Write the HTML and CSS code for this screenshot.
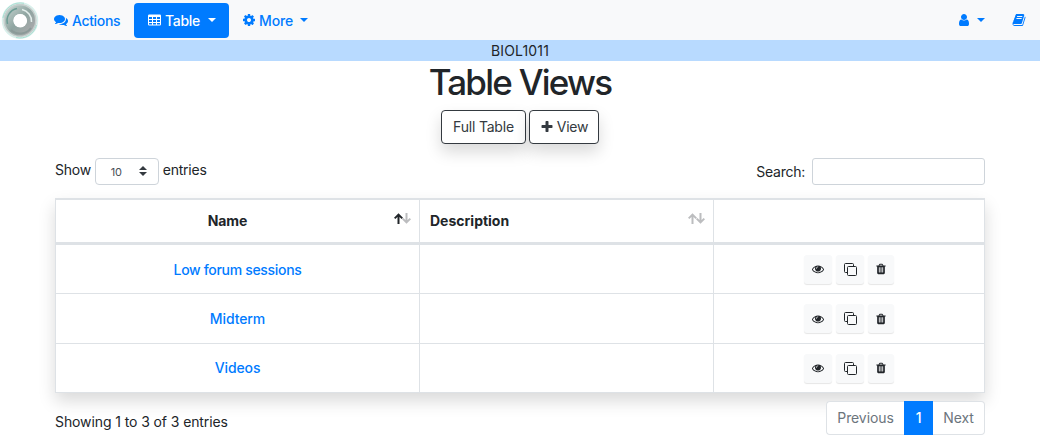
FILE: index.html
```html
<!DOCTYPE html>
<html lang="en">
<head>
<meta charset="utf-8">
<title>Table Views</title>
<link rel="stylesheet" href="styles.css">
</head>
<body>
<svg class="defs" width="0" height="0" aria-hidden="true">
  <symbol id="comments" viewBox="0 0 1792 1792"><path d="M1408 768q0 139-94 257t-256.500 186.500-353.500 68.500q-86 0-176-16-124 88-278 128-36 9-86 16h-3q-11 0-20.500-8t-11.500-21q-1-3-1-6.500t.5-6.500 2-6l2.500-5 3.500-5.500 4-5 4.500-5 4-4.500q5-6 23-25t26-29.500 22.500-29 25-38.500 20.500-44q-124-72-195-177t-71-224q0-139 94-257t256.500-186.500 353.500-68.500 353.500 68.500 256.500 186.500 94 257zm384 256q0 120-71 224.500t-195 176.500q10 24 20.500 44t25 38.500 22.500 29 26 29.500 23 25q1 1 4 4.500t4.500 5 4 5 3.500 5.500l2.500 5 2 6 .5 6.500-1 6.500q-3 14-13 22t-22 7q-50-7-86-16-154-40-278-128-90 16-176 16-271 0-472-132 58 4 88 4 161 0 309-45t264-129q125-92 192-212t67-254q0-77-23-152 129 71 204 178t75 230z"/></symbol>
  <symbol id="cog" viewBox="0 0 1792 1792"><path d="M1152 896q0-106-75-181t-181-75-181 75-75 181 75 181 181 75 181-75 75-181zm512-109v222q0 12-8 23t-20 13l-185 28q-19 54-39 91 35 50 107 138 10 12 10 25t-9 23q-27 37-99 108t-94 71q-12 0-26-9l-138-108q-44 23-91 38-16 136-29 186-7 28-36 28h-222q-14 0-24.500-8.500t-11.500-21.500l-28-184q-49-16-90-37l-141 107q-10 9-25 9-14 0-25-11-126-114-165-168-7-10-7-23 0-12 8-23 15-21 51-66.500t54-70.500q-27-50-41-99l-183-27q-13-2-21-12.500t-8-23.500v-222q0-12 8-23t19-13l186-28q14-46 39-92-40-57-107-138-10-12-10-24 0-10 9-23 26-36 98.500-107.500t94.500-71.500q13 0 26 10l138 107q44-23 91-38 16-136 29-186 7-28 36-28h222q14 0 24.500 8.500t11.500 21.500l28 184q49 16 90 37l142-107q9-9 24-9 13 0 25 10 129 119 165 170 7 8 7 22 0 12-8 23-15 21-51 66.500t-54 70.500q26 50 41 98l183 28q13 2 21 12.500t8 23.500z"/></symbol>
  <symbol id="user" viewBox="0 0 1792 1792"><path d="M1536 1399q0 109-62.500 187t-150.500 78h-854q-88 0-150.500-78t-62.500-187q0-85 8.500-160.500t31.500-152 58.500-131 94-89 134.500-34.500q131 128 313 128t313-128q76 0 134.500 34.500t94 89 58.500 131 31.500 152 8.500 160.500zm-256-887q0 159-112.500 271.500t-271.500 112.500-271.500-112.500-112.500-271.500 112.500-271.500 271.500-112.500 271.500 112.500 112.500 271.500z"/></symbol>
  <symbol id="book" viewBox="0 0 1792 1792"><path d="M1703 478q40 57 18 129l-275 906q-19 64-76.500 107.500t-122.500 43.500h-923q-77 0-148.500-53.500t-99.500-131.500q-24-67-2-127 0-4 3-27t4-37q1-8-3-21.500t-3-19.500q2-11 8-21t16.500-23.500 16.500-23.500q23-38 45-91.500t30-91.500q3-10 .5-30t-.5-28q3-11 17-28t17-23q21-36 42-92t25-90q1-9-2.500-32t.5-28q4-13 22-30.500t22-22.500q19-26 42.500-84.500t27.500-96.500q1-8-3-25.500t-2-26.500q2-8 9-18t18-23 17-21q8-12 16.500-30.500t15-35 16-36 19.500-32 26.500-23.500 36-11.500 47.500 5.500l-1 3q38-9 51-9h761q74 0 114 56t18 130l-274 906q-36 119-71.500 153.500t-128.500 34.500h-869q-27 0-38 15-11 16-1 43 24 70 144 70h923q29 0 56-15.500t35-41.500l300-987q7-22 5-57 38 15 59 43zm-1064 2q-4 13 2 22.500t20 9.500h608q13 0 25.500-9.500t16.500-22.500l21-64q4-13-2-22.500t-20-9.500h-608q-13 0-25.500 9.500t-16.500 22.500zm-83 256q-4 13 2 22.500t20 9.500h608q13 0 25.500-9.500t16.500-22.500l21-64q4-13-2-22.500t-20-9.500h-608q-13 0-25.500 9.500t-16.500 22.500z"/></symbol>
  <symbol id="plus" viewBox="0 0 1792 1792"><path d="M1600 736v192q0 40-28 68t-68 28h-416v416q0 40-28 68t-68 28h-192q-40 0-68-28t-28-68v-416h-416q-40 0-68-28t-28-68v-192q0-40 28-68t68-28h416v-416q0-40 28-68t68-28h192q40 0 68 28t28 68v416h416q40 0 68 28t28 68z"/></symbol>
  <symbol id="eye" viewBox="0 0 1792 1792"><path d="M1664 960q-152-236-381-353 61 104 61 225 0 185-131.500 316.500t-316.500 131.500-316.500-131.500-131.500-316.500q0-121 61-225-229 117-381 353 133 205 333.500 326.500t434.500 121.500 434.500-121.500 333.500-326.500zm-720-384q0-20-14-34t-34-14q-125 0-214.500 89.500t-89.500 214.500q0 20 14 34t34 14 34-14 14-34q0-86 61-147t147-61q20 0 34-14t14-34zm848 384q0 34-20 69-140 230-376.500 368.500t-499.500 138.500-499.500-139-376.500-368q-20-35-20-69t20-69q140-229 376.500-368t499.500-139 499.500 139 376.500 368q20 35 20 69z"/></symbol>
  <symbol id="trash" viewBox="0 0 1792 1792"><path d="M704 1376v-704q0-14-9-23t-23-9h-64q-14 0-23 9t-9 23v704q0 14 9 23t23 9h64q14 0 23-9t9-23zm256 0v-704q0-14-9-23t-23-9h-64q-14 0-23 9t-9 23v704q0 14 9 23t23 9h64q14 0 23-9t9-23zm256 0v-704q0-14-9-23t-23-9h-64q-14 0-23 9t-9 23v704q0 14 9 23t23 9h64q14 0 23-9t9-23zm-544-992h448l-48-117q-7-9-17-11h-317q-10 2-17 11zm928 32v64q0 14-9 23t-23 9h-96v948q0 83-47 143.500t-113 60.500h-832q-66 0-113-58.500t-47-141.500v-952h-96q-14 0-23-9t-9-23v-64q0-14 9-23t23-9h309l70-167q15-37 54-63t79-26h320q40 0 79 26t54 63l70 167h309q14 0 23 9t9 23z"/></symbol>
  <symbol id="grid" viewBox="0 0 13 12"><path fill-rule="evenodd" d="M1.200 .5h10.600q1.200 0 1.200 1.200v8.600q0 1.200-1.200 1.200H1.200Q0 11.500 0 10.300V1.700Q0 .5 1.200 .5zM1 3v2h3V3zm4 0v2h3V3zm4 0v2h3V3zM1 6v2h3V6zm4 0v2h3V6zm4 0v2h3V6zM1 9v1.500h3V9zm4 0v1.500h3V9zm4 0v1.500h3V9z"/></symbol>
  <symbol id="clone" viewBox="0 0 13 13"><g fill="none" stroke="currentColor"><rect x="3.500" y="3.500" width="9" height="9" rx="1"/><path d="M3.500 9.500h-2q-1 0-1-1v-7q0-1 1-1h7q1 0 1 1v2"/></g></symbol>
  <symbol id="up" viewBox="0 0 9 11"><path fill="none" stroke="currentColor" stroke-width="2" d="M4.500 11V1.500M.7 5.400 4.500 1.600l3.800 3.800"/></symbol>
</svg>

<nav class="navbar">
  <svg class="logo" viewBox="0 0 40 40">
    <defs>
      <linearGradient id="ring" x1="0" y1="0" x2="1" y2="1">
        <stop offset="0" stop-color="#b9c9c5"/><stop offset=".5" stop-color="#8fa5a1"/><stop offset="1" stop-color="#a8a9aa"/>
      </linearGradient>
    </defs>
    <rect width="40" height="40" fill="#fff"/>
    <g fill="none">
      <circle cx="20" cy="20.500" r="17.500" stroke="#d8f0eb" stroke-width="1.500"/>
      <circle cx="20" cy="20.500" r="15.500" stroke="#c5cfcd" stroke-width="2.500"/>
      <circle cx="20" cy="20.500" r="10.800" stroke="url(#ring)" stroke-width="8.500"/>
      <path d="M3 18A17.500 17.500 0 0 1 24 3.300M36.500 25A17 17 0 0 1 16 37.500" stroke="#a9dfd3"/>
      <path d="M7.500 24A12.500 12.500 0 0 1 17 8.500" stroke="#6b9c94" stroke-width="1.500"/>
      <path d="M22 9.500A12 12 0 0 1 31.500 22" stroke="#e4efec" stroke-width="1.500"/>
      <path d="M11 30A13.500 13.500 0 0 0 31 28" stroke="#8b9a98" stroke-width="2"/>
    </g>
    <circle cx="20.300" cy="20.800" r="6.800" fill="#fff"/>
  </svg>
  <a class="nav-item actions"><svg class="icon"><use href="#comments"/></svg><span>Actions</span></a>
  <a class="nav-item active"><svg class="icon-grid"><use href="#grid"/></svg><span>Table</span><i class="caret"></i></a>
  <a class="nav-item more"><svg class="icon"><use href="#cog"/></svg><span>More</span><i class="caret"></i></a>
  <div class="nav-right">
    <a class="nav-item account"><svg class="icon"><use href="#user"/></svg><i class="caret"></i></a>
    <a class="nav-item"><svg class="icon"><use href="#book"/></svg></a>
  </div>
</nav>
<div class="course">BIOL1011</div>

<main class="container">
  <h1 class="title">Table Views</h1>
  <div class="buttons">
    <button class="btn full">Full Table</button>
    <button class="btn view"><svg class="icon"><use href="#plus"/></svg><span>View</span></button>
  </div>
  <div class="controls">
    <div class="length"><span>Show</span>
      <div class="select"><span>10</span><svg class="arrows" viewBox="0 0 8 10"><path fill="#343a40" d="M4 0 8 4H0zM4 10 0 6h8z"/></svg></div>
      <span>entries</span></div>
    <label class="search"><span>Search:</span><input class="search-input" type="text"></label>
  </div>
  <table class="table">
    <colgroup><col class="col-name"><col class="col-desc"><col class="col-ops"></colgroup>
    <thead>
      <tr>
        <th><div class="head"><span class="head-name">Name</span><span class="sort asc"><svg><use href="#up"/></svg><svg class="down"><use href="#up"/></svg></span></div></th>
        <th><div class="head"><span class="head-desc">Description</span><span class="sort"><svg><use href="#up"/></svg><svg class="down"><use href="#up"/></svg></span></div></th>
        <th></th>
      </tr>
    </thead>
    <tbody>
      <tr><td><a class="link forum">Low forum sessions</a></td><td></td><td><div class="ops"><span class="op"><svg><use href="#eye"/></svg></span><span class="op"><svg class="clone"><use href="#clone"/></svg></span><span class="op del"><svg><use href="#trash"/></svg></span></div></td></tr>
      <tr class="tall"><td><a class="link">Midterm</a></td><td></td><td><div class="ops"><span class="op"><svg><use href="#eye"/></svg></span><span class="op"><svg class="clone"><use href="#clone"/></svg></span><span class="op del"><svg><use href="#trash"/></svg></span></div></td></tr>
      <tr class="last"><td><a class="link">Videos</a></td><td></td><td><div class="ops"><span class="op"><svg><use href="#eye"/></svg></span><span class="op"><svg class="clone"><use href="#clone"/></svg></span><span class="op del"><svg><use href="#trash"/></svg></span></div></td></tr>
    </tbody>
  </table>
  <div class="footer">
    <div class="info">Showing 1 to 3 of 3 entries</div>
    <div class="pages"><span class="page prev">Previous</span><span class="page current">1</span><span class="page next">Next</span></div>
  </div>
</main>
</body>
</html>
```
FILE: styles.css
```css
* { box-sizing: border-box; }
body {
  margin: 0;
  height: 436px;
  overflow: hidden;
  background: #fff;
  color: #212529;
  font: 14px/21px Inter, "Liberation Sans", sans-serif;
  letter-spacing: -0.1px;
}
svg { display: block; fill: currentColor; flex: none; }
.defs { position: absolute; }
.icon { width: 14px; height: 14px; }
.icon-grid { width: 13px; height: 12px; }

.navbar { display: flex; align-items: center; height: 40px; background: #f8f9fa; color: #007bff; font-weight: 500; }
.logo { width: 40px; height: 40px; }
.nav-item { display: flex; align-items: center; gap: 4px; height: 35px; padding: 0 14px; border-radius: 4px; }
.nav-item.actions { width: 94px; letter-spacing: -0.35px; }
.nav-item.active { width: 95px; background: #007bff; color: #fff; letter-spacing: -0.3px; }
.nav-item.more { padding-left: 13px; gap: 3px; letter-spacing: -0.1px; }
.caret { margin-left: 4px; border: 4px solid transparent; border-top-color: currentColor; border-bottom: 0; }
.nav-right { display: flex; margin-left: auto; }
.nav-item.account { padding-right: 13px; }
.account .caret { margin-left: 2px; }
.course { height: 21px; background: #b8daff; text-align: center; letter-spacing: 0.15px; }

.container { width: 930px; margin: 0 auto; }
.title { margin: 0; height: 42px; font-size: 35px; line-height: 43px; font-weight: 500; text-align: center; letter-spacing: -1.75px; }
.buttons { display: flex; justify-content: center; gap: 3px; margin-top: 7px; }
.btn {
  display: flex; align-items: center; justify-content: center; gap: 3px;
  height: 34px; padding: 0 0 2px; border: 1px solid #343a40; border-radius: 4px;
  background: #fff; color: #343a40; font: inherit; letter-spacing: -0.2px;
  box-shadow: 0 8px 16px rgba(0, 0, 0, .15);
}
.btn.full { width: 85px; }
.btn.view { width: 70px; }
.btn.view .icon { margin-top: 1px; }

.controls { display: flex; justify-content: space-between; height: 27px; margin-top: 14px; }
.length { display: flex; gap: 4px; line-height: 24px; letter-spacing: -0.25px; }
.select {
  display: flex; align-items: center; justify-content: space-between;
  width: 64px; height: 27px; padding: 1px 11px 0 15px;
  border: 1px solid #ced4da; border-radius: 4px; color: #495057; font-size: 11px;
}
.arrows { width: 8px; height: 10px; margin-bottom: 2px; }
.search { display: flex; align-items: center; gap: 7px; letter-spacing: -0.25px; }
.search span { margin-bottom: 1px; }
.search-input { width: 173px; height: 27px; border: 1px solid #ced4da; border-radius: 3px; background: #fff; }

.table {
  width: 930px; margin-top: 13px; table-layout: fixed;
  border-collapse: separate; border-spacing: 0; border-left: 1px solid #dee2e6;
  background: #fff; box-shadow: 0 8px 16px rgba(0, 0, 0, .15);
}
.col-name { width: 364px; }
.col-desc { width: 294px; }
.table th, .table td { padding: 0; border-right: 1px solid #dee2e6; text-align: center; }
.table th { height: 47px; border-top: 2px solid #dee2e6; border-bottom: 3px solid #dee2e6; font-weight: 700; }
.table td { height: 49px; border-bottom: 1px solid #dee2e6; }
.table .tall td { height: 50px; }
.head { display: flex; align-items: center; padding: 0 8px 1px 10px; }
.head-name { flex: 1; padding-right: 5px; }
.head-desc { flex: 1; text-align: left; letter-spacing: 0; }
.sort { display: flex; margin-bottom: 4px; color: #bcbdbf; }
.sort svg { width: 9px; height: 11px; }
.sort .down { margin-left: -1px; transform: rotate(180deg); }
.sort.asc svg:first-child { color: #212529; }
.link { color: #007bff; font-weight: 500; }
.forum { letter-spacing: -0.32px; }
.last .link { display: block; padding-bottom: 2px; }
.ops { display: flex; justify-content: center; gap: 4px; }
.op { display: flex; align-items: center; justify-content: center; width: 28px; height: 29px; border-radius: 3px; background: #f8f9fa; box-shadow: 0 1px 1px rgba(0, 0, 0, .1); }
.op.del { width: 26px; }
.op svg { width: 12px; height: 12px; }
.op .clone { width: 13px; height: 13px; }

.footer { display: flex; justify-content: space-between; padding-top: 8px; }
.info { padding-top: 10px; }
.pages { display: flex; height: 34px; line-height: 32px; color: #6c757d; text-align: center; }
.page { border: 1px solid #dee2e6; background: #fff; }
.prev { width: 78px; border-right: 0; border-radius: 4px 0 0 4px; }
.current { width: 29px; border-color: #007bff; background: #007bff; color: #fff; font-weight: 500; }
.next { width: 52px; border-left: 0; border-radius: 0 4px 4px 0; }
```
